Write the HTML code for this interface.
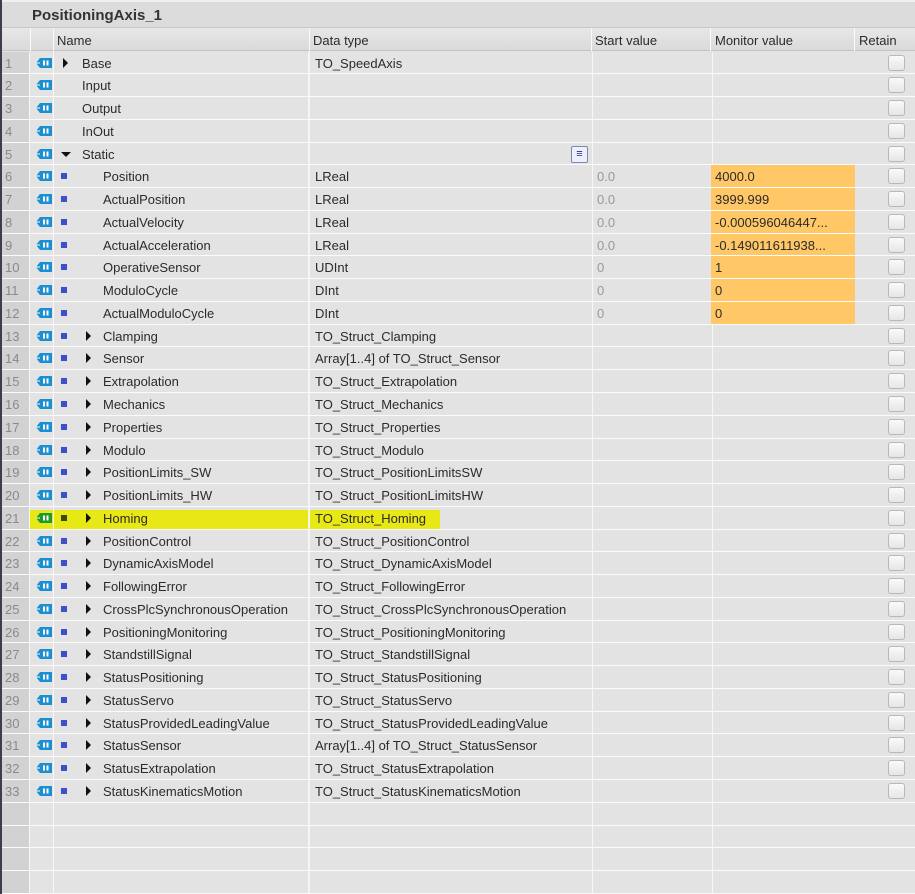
<!DOCTYPE html>
<html><head><meta charset="utf-8"><style>
*{margin:0;padding:0;box-sizing:border-box}
body{width:915px;height:894px;overflow:hidden;background:#e3e3e3;font-family:"Liberation Sans",sans-serif;font-size:13px;color:#2b2b2b;position:relative}
.lb{position:absolute;left:0;top:0;width:2px;height:894px;background:#3a3f4a;z-index:5}
.title{position:absolute;left:2px;top:0;width:913px;height:28px;background:#dcdcdc;border-top:2px solid #f0f0f0;border-bottom:1px solid #c8c8c8}
.title span{position:absolute;left:30px;top:5px;font-size:15px;font-weight:bold;color:#333}
.hdr{position:absolute;left:2px;top:28px;width:913px;height:23px;background:linear-gradient(#e8e8e8,#dadada);border-bottom:1px solid #c4c4c4}
.hdr span{position:absolute;top:5px}
.vs{position:absolute;top:28px;height:23px;width:1px;background:#fafafa}
.rows{position:absolute;left:2px;top:51.5px;width:913px}
.r{position:relative;height:22.78px;border-bottom:1px solid #fbfbfb}
.r>*{position:absolute}
.n{left:0;top:0;width:28px;height:100%;background:#d2d2d2;color:#8a8a8a;padding-left:3px;line-height:23px;border-right:1px solid #f7f7f7}
.ic{left:30px;top:0;width:22px;height:100%;border-right:1px solid #f7f7f7}
.ic svg{position:absolute;left:3px;top:5px}
.nm{left:52px;top:0;width:256px;height:100%;border-right:2px solid #f5f5f5}
.sq{left:59px;top:8px;width:6px;height:6px;background:#3e50c8}
.tri{width:0;height:0;border-top:5px solid transparent;border-bottom:5px solid transparent;border-left:5px solid #111;top:6px}
.trd{width:0;height:0;border-left:5px solid transparent;border-right:5px solid transparent;border-top:5px solid #111;top:9px;left:59px}
.t{top:4px;white-space:nowrap}
.dt{left:312px;top:0;width:279px;height:100%;border-right:1px solid #f7f7f7;padding-left:1px;line-height:23px;white-space:nowrap}
.sv{left:591px;top:0;width:120px;height:100%;border-right:1px solid #f7f7f7;color:#999;padding-left:4px;line-height:23px}
.mv{left:709px;top:0;width:144px;height:100%;padding-left:4px;line-height:23px;white-space:nowrap}
.or{background:#ffc765}
.cb{left:886px;top:3px;width:17px;height:16px;border:1px solid #b8b8b8;border-radius:3px;background:linear-gradient(#fafafa,#e6e6e6)}
.hl{position:absolute;left:10px;top:510px;width:430px;height:20px;background:#e8e800;opacity:.9}
</style></head><body>
<div class="lb"></div>
<div class="title"><span>PositioningAxis_1</span></div>
<div class="hdr"><span style="left:55px">Name</span><span style="left:311px">Data type</span><span style="left:593px">Start value</span><span style="left:713px">Monitor value</span><span style="left:857px">Retain</span></div>
<div class="vs" style="left:30px"></div><div class="vs" style="left:53px"></div><div class="vs" style="left:309px"></div><div class="vs" style="left:591px"></div><div class="vs" style="left:710px"></div><div class="vs" style="left:854px"></div>
<div class="hl"></div>
<div class="rows" id="rows">
</div>
<script>
var d=[
[1,0,'Base','TO_SpeedAxis','','',1],
[2,0,'Input','','','',0],
[3,0,'Output','','','',0],
[4,0,'InOut','','','',0],
[5,0,'Static','','','',2],
[6,1,'Position','LReal','0.0','4000.0',0],
[7,1,'ActualPosition','LReal','0.0','3999.999',0],
[8,1,'ActualVelocity','LReal','0.0','-0.000596046447...',0],
[9,1,'ActualAcceleration','LReal','0.0','-0.149011611938...',0],
[10,1,'OperativeSensor','UDInt','0','1',0],
[11,1,'ModuloCycle','DInt','0','0',0],
[12,1,'ActualModuloCycle','DInt','0','0',0],
[13,1,'Clamping','TO_Struct_Clamping','','',1],
[14,1,'Sensor','Array[1..4] of TO_Struct_Sensor','','',1],
[15,1,'Extrapolation','TO_Struct_Extrapolation','','',1],
[16,1,'Mechanics','TO_Struct_Mechanics','','',1],
[17,1,'Properties','TO_Struct_Properties','','',1],
[18,1,'Modulo','TO_Struct_Modulo','','',1],
[19,1,'PositionLimits_SW','TO_Struct_PositionLimitsSW','','',1],
[20,1,'PositionLimits_HW','TO_Struct_PositionLimitsHW','','',1],
[21,1,'Homing','TO_Struct_Homing','','',1],
[22,1,'PositionControl','TO_Struct_PositionControl','','',1],
[23,1,'DynamicAxisModel','TO_Struct_DynamicAxisModel','','',1],
[24,1,'FollowingError','TO_Struct_FollowingError','','',1],
[25,1,'CrossPlcSynchronousOperation','TO_Struct_CrossPlcSynchronousOperation','','',1],
[26,1,'PositioningMonitoring','TO_Struct_PositioningMonitoring','','',1],
[27,1,'StandstillSignal','TO_Struct_StandstillSignal','','',1],
[28,1,'StatusPositioning','TO_Struct_StatusPositioning','','',1],
[29,1,'StatusServo','TO_Struct_StatusServo','','',1],
[30,1,'StatusProvidedLeadingValue','TO_Struct_StatusProvidedLeadingValue','','',1],
[31,1,'StatusSensor','Array[1..4] of TO_Struct_StatusSensor','','',1],
[32,1,'StatusExtrapolation','TO_Struct_StatusExtrapolation','','',1],
[33,1,'StatusKinematicsMotion','TO_Struct_StatusKinematicsMotion','','',1]];
function icon(g){var c=g?'#1e9a2a':'#1b8fd0';return '<svg width="18" height="12" viewBox="0 0 18 12"><path d="M5 1H17V11H5L1 6Z" fill="'+c+'"/><path d="M1 6H5" stroke="#fff" stroke-width="1"/><rect x="8" y="3.5" width="2" height="5" fill="#fff"/><rect x="11.5" y="3.5" width="2" height="5" fill="#fff"/></svg>';}
var h='';
d.forEach(function(r){var g=r[0]==21;h+='<div class="r"><div class="n">'+r[0]+'</div><div class="ic">'+icon(g)+'</div><div class="nm"></div>';
if(r[1]==0){if(r[6]==1)h+='<div class="tri" style="left:61px"></div>';if(r[6]==2)h+='<div class="trd"></div>';h+='<div class="t" style="left:80px">'+r[2]+'</div>';}
else{h+='<div class="sq"'+(g?' style="background:#3a4a10"':'')+'></div>';if(r[6]==1)h+='<div class="tri" style="left:84px"></div>';h+='<div class="t" style="left:101px">'+r[2]+'</div>';}
h+='<div class="dt">'+r[3]+'</div><div class="sv">'+r[4]+'</div><div class="mv'+(r[5]?' or':'')+'">'+r[5]+'</div><div class="cb"></div>';
if(r[0]==5)h+='<div style="left:569px;top:3px;width:17px;height:17px;border:1px solid #7a8aa8;border-radius:2px;background:#eef;text-align:center;font-size:11px;line-height:14px;color:#1a2a80">&#8801;</div>';
h+='</div>';});
for(var i=0;i<4;i++)h+='<div class="r"><div class="n"></div><div class="ic"></div><div class="nm"></div><div class="dt"></div><div class="sv"></div><div class="mv"></div></div>';
document.getElementById('rows').innerHTML=h;
</script>
</body></html>
